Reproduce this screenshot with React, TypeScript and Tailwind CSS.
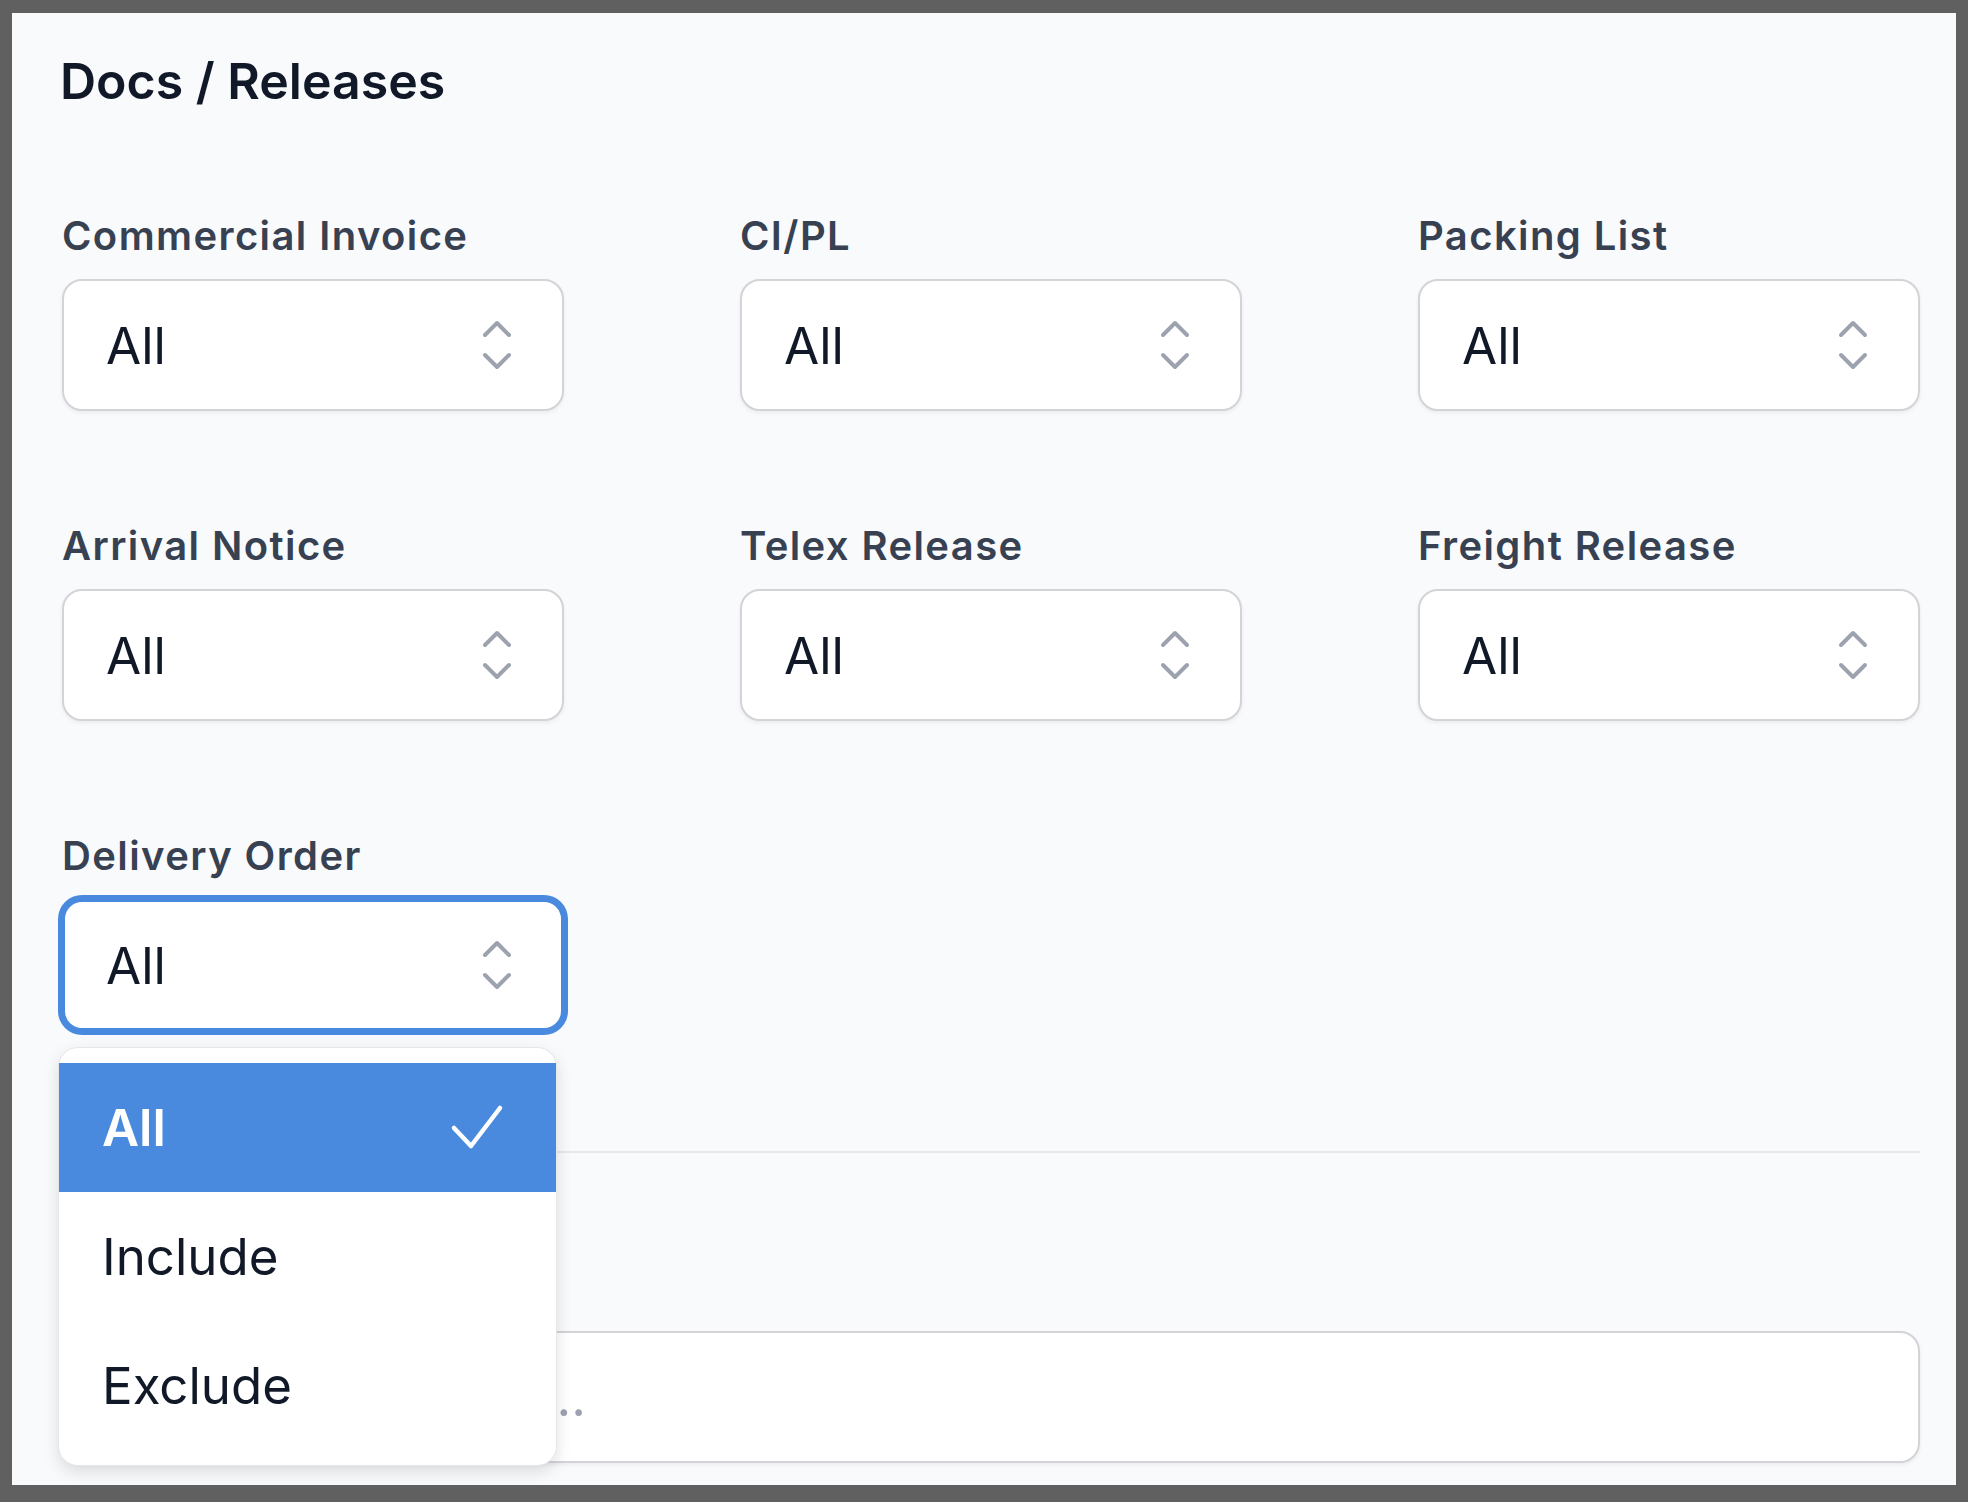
import { useState } from "react"

const fields = [
  "Commercial Invoice",
  "CI/PL",
  "Packing List",
  "Arrival Notice",
  "Telex Release",
  "Freight Release",
  "Delivery Order",
]

const options = ["All", "Include", "Exclude"]

function UpDownIcon() {
  return (
    <svg
      width="30"
      height="50"
      viewBox="0 0 30 50"
      fill="none"
      stroke="#9ca3af"
      strokeWidth="4"
      strokeLinecap="round"
      strokeLinejoin="round"
    >
      <path d="M3 15 15 3l12 12" />
      <path d="M3 35l12 12 12-12" />
    </svg>
  )
}

function CheckIcon() {
  return (
    <svg
      width="54"
      height="48"
      viewBox="0 0 54 48"
      fill="none"
      stroke="white"
      strokeWidth="4.5"
      strokeLinecap="round"
      strokeLinejoin="round"
    >
      <path d="M4 24 21 42 50 4" />
    </svg>
  )
}

function FilterSelect({
  label,
  value,
  open,
  onToggle,
  onPick,
}: {
  label: string
  value: string
  open: boolean
  onToggle: () => void
  onPick: (v: string) => void
}) {
  return (
    <div className="flex flex-col gap-[20px]">
      <div className="text-[40px] leading-[46px] font-semibold tracking-[0.035em] text-[#374151]">
        {label}
      </div>
      <div className="relative">
        <button
          type="button"
          onClick={onToggle}
          className={
            open
              ? "flex h-[132px] w-full items-center justify-between rounded-[20px] border-[3px] border-[#4a8ade] bg-white pl-[41px] pr-[49px] shadow-[0_0_0_4px_#4a8ade]"
              : "flex h-[132px] w-full items-center justify-between rounded-[20px] border-2 border-[#d4d4d8] bg-white pl-[42px] pr-[50px] shadow-[0_2px_4px_rgba(0,0,0,0.06)]"
          }
        >
          <span className="pt-[2px] text-[51px] leading-[60px] text-[#111827]">
            {value}
          </span>
          <UpDownIcon />
        </button>
        {open && (
          <div className="absolute left-[-4px] top-[calc(100%+16px)] z-10 w-[499px] rounded-[20px] border border-[#e5e7eb] bg-white py-[15px] shadow-[0_6px_16px_rgba(0,0,0,0.12)]">
            {options.map((o) =>
              o === value ? (
                <div
                  key={o}
                  onClick={() => onPick(o)}
                  className="flex h-[129px] items-center justify-between bg-[#4a8ade] pl-[43px] pr-[52px] text-[51px] leading-[60px] font-semibold text-white"
                >
                  <span>{o}</span>
                  <CheckIcon />
                </div>
              ) : (
                <div
                  key={o}
                  onClick={() => onPick(o)}
                  className="flex h-[129px] items-center pl-[43px] text-[51px] leading-[60px] text-[#111827]"
                >
                  {o}
                </div>
              ),
            )}
          </div>
        )}
      </div>
    </div>
  )
}

export default function App() {
  const [values, setValues] = useState<Record<string, string>>({})
  const [openField, setOpenField] = useState<string | null>("Delivery Order")

  return (
    <div className="h-[1502px] w-[1968px] bg-[#606060] pl-[12px] pt-[13px] font-['Inter',sans-serif]">
      <div className="h-[1472px] w-[1944px] bg-[#f8fafc] pl-[50px] pt-[38px]">
        <div className="w-[1858px]">
          <h2 className="-ml-[2px] text-[50px] leading-[60px] font-semibold text-[#111827]">
            Docs / Releases
          </h2>

          <div className="mt-[102px] grid grid-cols-[502px_502px_502px] gap-x-[176px] gap-y-[112px]">
            {fields.map((f) => (
              <FilterSelect
                key={f}
                label={f}
                value={values[f] ?? "All"}
                open={openField === f}
                onToggle={() => setOpenField(openField === f ? null : f)}
                onPick={(v) => {
                  setValues({ ...values, [f]: v })
                  setOpenField(null)
                }}
              />
            ))}
          </div>

          <div className="mt-[120px] h-[2px] bg-[#e5e7eb]" />

          <div className="mt-[112px] flex flex-col gap-[20px]">
            <div className="text-[40px] leading-[46px] font-semibold tracking-[0.035em] text-[#374151]">
              Remarks
            </div>
            <div className="flex h-[132px] items-center rounded-[20px] border-2 border-[#d4d4d8] bg-white pl-[42px] shadow-[0_2px_4px_rgba(0,0,0,0.06)]">
              <span className="pt-[2px] text-[51px] leading-[60px] text-[#9ca3af]">
                Add release notes...
              </span>
            </div>
          </div>
        </div>
      </div>
    </div>
  )
}
